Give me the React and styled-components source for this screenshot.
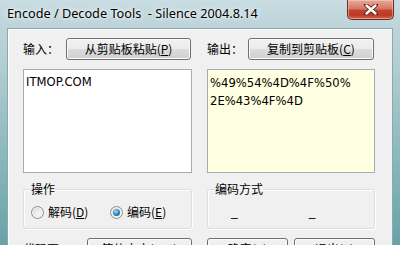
import React from "react";
import styled, { createGlobalStyle } from "styled-components";

const Global = createGlobalStyle`
  html, body { margin: 0; padding: 0; background: #ffffff; }
  body { width: 400px; height: 255px; overflow: hidden; }
`;

const CJK = `"Noto Sans CJK SC", "Noto Sans", sans-serif`;

const Window = styled.div`
  width: 400px;
  height: 245px;
  overflow: hidden;
  display: flex;
  flex-direction: column;
  background: linear-gradient(180deg, #c3d8de 0%, #b3ced3 25%, #8fbabe 60%, #67a2a7 100%);
`;

const TitleBar = styled.div`
  position: relative;
  height: 28px;
  flex: 0 0 28px;
  display: flex;
  align-items: flex-start;
  padding-left: 7px;
  background: linear-gradient(180deg, #c9dde2 0%, #bcd3d9 100%);
`;

const Title = styled.div`
  font-family: "Noto Sans", "Open Sans", sans-serif;
  font-size: 12.7px;
  line-height: 16px;
  margin-top: 5px;
  color: #000;
  white-space: pre;
  text-shadow: 0 0 6px rgba(255, 255, 255, 0.9), 0 0 3px rgba(255, 255, 255, 0.8);
`;

const CloseButton = styled.div`
  position: absolute;
  top: 0;
  left: 347px;
  width: 45px;
  height: 19px;
  border: 1px solid #6d2b24;
  border-top: none;
  border-radius: 0 0 5px 5px;
  background: linear-gradient(180deg, #e6a99b 0%, #d77764 45%, #c2432d 55%, #b93a26 80%, #d46a4f 100%);
  box-shadow: inset 0 0 0 1px rgba(255, 220, 210, 0.45);
  display: flex;
  align-items: center;
  justify-content: center;
`;

const CloseGlyph = styled.svg`
  display: block;
`;

const Client = styled.div`
  flex: 1;
  margin: 0 7px 0 7px;
  background: #f0f0f0;
  border: 1px solid #8aa8ad;
  border-bottom: none;
  box-shadow: inset 0 1px 0 #ffffff, inset 1px 0 0 #fbfbfb;
  padding: 9px 16px 0 15px;
  display: grid;
  grid-template-columns: 169px 168px;
  grid-template-rows: 22px 104px 47px 22px;
  column-gap: 15px;
  row-gap: 9px;
  align-content: start;
  overflow: hidden;
`;

const Row = styled.div`
  display: flex;
  align-items: center;
  gap: ${(p) => p.$gap || 0}px;
`;

const Label = styled.span`
  width: ${(p) => p.$w}px;
  flex: 0 0 ${(p) => p.$w}px;
  font-family: ${CJK};
  font-size: 12px;
  line-height: 16px;
  color: #000;
  white-space: nowrap;
`;

const Button = styled.button`
  width: ${(p) => p.$w}px;
  height: 22px;
  flex: 0 0 auto;
  padding: 0;
  margin: 0;
  font-family: ${CJK};
  font-size: 12px;
  line-height: 16px;
  color: #000;
  border: 1px solid #707070;
  border-radius: 3px;
  background: linear-gradient(180deg, #f2f2f2 0%, #ebebeb 50%, #dddddd 50%, #cfcfcf 100%);
  box-shadow: inset 0 0 0 1px #fcfcfc;
  white-space: nowrap;
  cursor: default;
  u { text-decoration: underline; text-underline-offset: 1px; }
`;

const TextBox = styled.div`
  height: 104px;
  box-sizing: border-box;
  border: 1px solid #a5abb3;
  background: ${(p) => p.$bg};
  padding: ${(p) => p.$pad};
  font-family: "DejaVu Sans", sans-serif;
  font-size: 11.6px;
  line-height: 18px;
  color: #000;
`;

const Line = styled.div`
  white-space: nowrap;
`;

const Group = styled.fieldset`
  margin: 0;
  padding: 0 7px 0 7px;
  border: 1px solid #d5dfe5;
  border-radius: 3px;
  box-shadow: inset 1px 1px 0 #ffffff, 1px 1px 0 #ffffff;
  min-width: 0;
  box-sizing: border-box;
  height: 47px;
`;

const Legend = styled.legend`
  padding: 0;
  margin: 0;
  font-family: ${CJK};
  font-size: 12px;
  line-height: 14px;
  color: #000;
`;

const RadioRow = styled.div`
  display: flex;
  align-items: center;
  height: 14px;
  margin-top: 9px;
`;

const RadioItem = styled.label`
  display: flex;
  align-items: center;
  gap: 4px;
  width: ${(p) => p.$w}px;
  font-family: ${CJK};
  font-size: 12px;
  line-height: 14px;
  color: #000;
  u { text-decoration: underline; text-underline-offset: 1px; }
`;

const RadioDot = styled.span`
  position: relative;
  width: 11px;
  height: 11px;
  flex: 0 0 11px;
  border-radius: 50%;
  border: 1px solid #8f8f8f;
  background: radial-gradient(circle at 60% 65%, #f7f7f7 0%, #e6e6e6 50%, #cfcfcf 100%);
  box-shadow: inset 0 0 0 1px #f4f4f4;
  &::after {
    content: "";
    display: ${(p) => (p.$checked ? "block" : "none")};
    position: absolute;
    left: 2px;
    top: 2px;
    width: 7px;
    height: 7px;
    border-radius: 50%;
    background: radial-gradient(circle at 40% 35%, #a6e4fb 0%, #3d8fc9 45%, #12456f 100%);
  }
`;

const DashRow = styled.div`
  display: flex;
  align-items: center;
  height: 14px;
  margin-top: 9px;
  padding-left: 16px;
  gap: 71px;
`;

const Dash = styled.span`
  font-family: "Liberation Sans", sans-serif;
  font-size: 12px;
  line-height: 14px;
  color: #000;
`;

export default function App() {
  return (
    <>
      <Global />
      <Window>
        <TitleBar>
          <Title>{"Encode / Decode Tools  - Silence 2004.8.14"}</Title>
          <CloseButton>
            <CloseGlyph width="14" height="11" viewBox="0 0 14 11">
              <path d="M2 1 L12 10 M12 1 L2 10" stroke="#5a2019" strokeWidth="4.2" strokeLinecap="round" />
              <path d="M2.5 1.5 L11.5 9.5 M11.5 1.5 L2.5 9.5" stroke="#ffffff" strokeWidth="2.4" strokeLinecap="round" />
            </CloseGlyph>
          </CloseButton>
        </TitleBar>
        <Client>
          <Row>
            <Label $w={43}>输入：</Label>
            <Button $w={125}>从剪贴板粘贴(<u>P</u>)</Button>
          </Row>
          <Row>
            <Label $w={41}>输出：</Label>
            <Button $w={126}>复制到剪贴板(<u>C</u>)</Button>
          </Row>

          <TextBox $bg="#ffffff" $pad="3px 2px">
            <Line>ITMOP.COM</Line>
          </TextBox>
          <TextBox $bg="#ffffe1" $pad="4px 2px">
            <Line>%49%54%4D%4F%50%</Line>
            <Line>2E%43%4F%4D</Line>
          </TextBox>

          <Group>
            <Legend>操作</Legend>
            <RadioRow>
              <RadioItem $w={79}>
                <RadioDot />
                <span>解码(<u>D</u>)</span>
              </RadioItem>
              <RadioItem $w={70}>
                <RadioDot $checked />
                <span>编码(<u>E</u>)</span>
              </RadioItem>
            </RadioRow>
          </Group>
          <Group>
            <Legend>编码方式</Legend>
            <DashRow>
              <Dash>_</Dash>
              <Dash>_</Dash>
            </DashRow>
          </Group>

          <Row>
            <Label $w={64}>代码页：</Label>
            <Button $w={105}>简体中文(936)</Button>
          </Row>
          <Row $gap={6}>
            <Button $w={81}>确定(<u>A</u>)</Button>
            <Button $w={81}>退出(<u>X</u>)</Button>
          </Row>
        </Client>
      </Window>
    </>
  );
}
